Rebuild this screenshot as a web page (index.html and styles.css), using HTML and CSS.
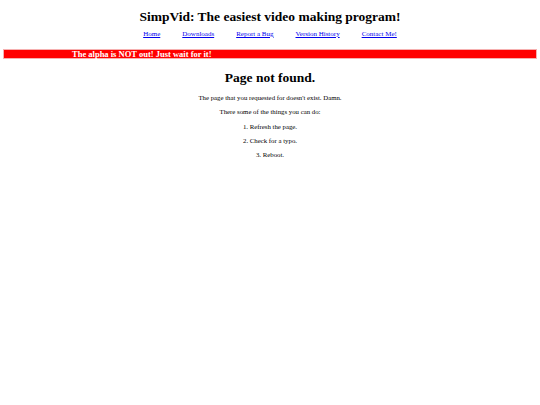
FILE: index.html
```html
<!DOCTYPE html>
<html>
<head>
<meta charset="utf-8">
<title>SimpVid</title>
<link rel="stylesheet" href="styles.css">
</head>
<body>
<header class="header">
  <h1 class="title">SimpVid: The easiest video making program!</h1>
  <nav class="nav">
    <a href="#">Home</a>
    <a href="#">Downloads</a>
    <a href="#">Report a Bug</a>
    <a href="#">Version History</a>
    <a href="#">Contact Me!</a>
  </nav>
</header>
<div class="banner"><span class="banner-text">The alpha is NOT out! Just wait for it!</span></div>
<main class="content">
  <h2 class="heading">Page not found.</h2>
  <p class="line">The page that you requested for doesn't exist. Damn.</p>
  <p class="line">There some of the things you can do:</p>
  <p class="line">1. Refresh the page.</p>
  <p class="line">2. Check for a typo.</p>
  <p class="line">3. Reboot.</p>
</main>
</body>
</html>
```
FILE: styles.css
```css
html, body {
  margin: 0;
  padding: 0;
  background: #fff;
  font-family: "Liberation Serif", "Times New Roman", serif;
  color: #000;
}
.header {
  text-align: center;
  padding-top: 9px;
}
.title {
  margin: 0;
  font-size: 13.5px;
  line-height: 16px;
  font-weight: bold;
}
.nav {
  display: flex;
  justify-content: center;
  gap: 22px;
  margin-top: 5px;
  font-size: 7px;
  line-height: 9px;
}
.nav a {
  color: #00e;
}
.banner {
  margin: 10px 3px 0 3px;
  height: 10px;
  background: #f00;
  border: 1px solid #f6b0b0;
  box-sizing: border-box;
  display: flex;
  align-items: center;
  padding-left: 68px;
}
.banner-text {
  color: #fff;
  font-weight: bold;
  font-size: 8.5px;
  line-height: 9px;
}
.content {
  text-align: center;
  padding-top: 11px;
}
.heading {
  margin: 0 0 5px 0;
  font-size: 13.5px;
  line-height: 16px;
  font-weight: bold;
}
.line {
  margin: 0;
  font-size: 6.8px;
  line-height: 14.3px;
}
```
